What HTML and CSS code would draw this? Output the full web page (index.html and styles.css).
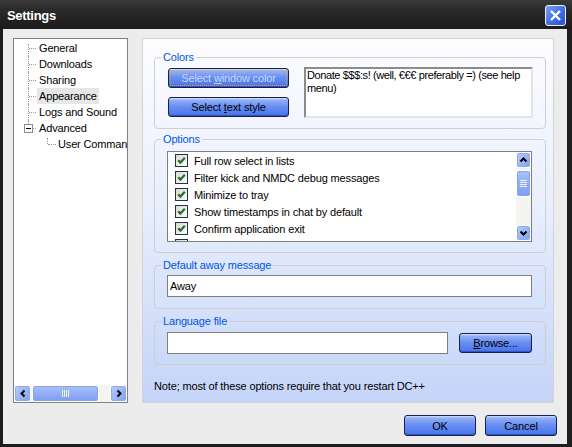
FILE: index.html
```html
<!DOCTYPE html>
<html lang="en">
<head>
    <meta charset="UTF-8">
    <title>Settings</title>
    <link rel="stylesheet" href="styles.css">
</head>
<body>
    <div class="window">
        <div class="titlebar">
            <span class="title">Settings</span>
            <button class="close-btn">
                <svg width="19" height="19" viewBox="0 0 19 19"><path d="M5 5 L14 14 M14 5 L5 14" stroke="#fff" stroke-width="2.4" fill="none"/></svg>
            </button>
        </div>
        <div class="client">
            <div class="main">
                <div class="tree">
                    <ul class="tree-list">
                        <li class="tree-item first"><span class="tree-label">General</span></li>
                        <li class="tree-item"><span class="tree-label">Downloads</span></li>
                        <li class="tree-item"><span class="tree-label">Sharing</span></li>
                        <li class="tree-item"><span class="tree-label selected">Appearance</span></li>
                        <li class="tree-item"><span class="tree-label">Logs and Sound</span></li>
                        <li class="tree-item last"><span class="tree-toggle"></span><span class="tree-label">Advanced</span></li>
                        <li class="tree-item child"><span class="tree-label">User Commands</span></li>
                    </ul>
                    <div class="hscroll">
                        <span class="sb-btn">
                            <svg width="8" height="9" viewBox="0 0 8 9"><path d="M5.5 1.5 L2.5 4.5 L5.5 7.5" stroke="#000" stroke-width="2" fill="none"/></svg>
                        </span>
                        <span class="sb-thumb sb-thumb-h"><i></i><i></i><i></i><i></i></span>
                        <span class="sb-track"></span>
                        <span class="sb-btn">
                            <svg width="8" height="9" viewBox="0 0 8 9"><path d="M2.5 1.5 L5.5 4.5 L2.5 7.5" stroke="#000" stroke-width="2" fill="none"/></svg>
                        </span>
                    </div>
                </div>

                <div class="panel">
                    <fieldset class="group group-colors">
                        <legend>Colors</legend>
                        <div class="colors-row">
                            <div class="color-buttons">
                                <button class="xp-btn color-btn focused">Select <u>w</u>indow color</button>
                                <button class="xp-btn color-btn">Select <u>t</u>ext style</button>
                            </div>
                            <div class="preview">Donate $$$:s! (well, €€€ preferably =) (see help menu)</div>
                        </div>
                    </fieldset>

                    <fieldset class="group group-options">
                        <legend>Options</legend>
                        <div class="optlist">
                            <div class="opt-items">
                                <div class="opt-row"><span class="check"><svg width="11" height="11" viewBox="0 0 11 11"><path d="M2.2 5.2 L4.4 7.6 L8.8 2.8" stroke="#2d6a2d" stroke-width="2.2" fill="none"/></svg></span>Full row select in lists</div>
                                <div class="opt-row"><span class="check"><svg width="11" height="11" viewBox="0 0 11 11"><path d="M2.2 5.2 L4.4 7.6 L8.8 2.8" stroke="#2d6a2d" stroke-width="2.2" fill="none"/></svg></span>Filter kick and NMDC debug messages</div>
                                <div class="opt-row"><span class="check"><svg width="11" height="11" viewBox="0 0 11 11"><path d="M2.2 5.2 L4.4 7.6 L8.8 2.8" stroke="#2d6a2d" stroke-width="2.2" fill="none"/></svg></span>Minimize to tray</div>
                                <div class="opt-row"><span class="check"><svg width="11" height="11" viewBox="0 0 11 11"><path d="M2.2 5.2 L4.4 7.6 L8.8 2.8" stroke="#2d6a2d" stroke-width="2.2" fill="none"/></svg></span>Show timestamps in chat by default</div>
                                <div class="opt-row"><span class="check"><svg width="11" height="11" viewBox="0 0 11 11"><path d="M2.2 5.2 L4.4 7.6 L8.8 2.8" stroke="#2d6a2d" stroke-width="2.2" fill="none"/></svg></span>Confirm application exit</div>
                                <div class="opt-row"><span class="check"></span></div>
                            </div>
                            <div class="vscroll">
                                <span class="sb-btn sb-btn-v">
                                    <svg width="9" height="8" viewBox="0 0 9 8"><path d="M1.5 5.5 L4.5 2.5 L7.5 5.5" stroke="#000" stroke-width="2" fill="none"/></svg>
                                </span>
                                <span class="sb-thumb sb-thumb-v"><i></i><i></i><i></i><i></i></span>
                                <span class="sb-track"></span>
                                <span class="sb-btn sb-btn-v">
                                    <svg width="9" height="8" viewBox="0 0 9 8"><path d="M1.5 2.5 L4.5 5.5 L7.5 2.5" stroke="#000" stroke-width="2" fill="none"/></svg>
                                </span>
                            </div>
                        </div>
                    </fieldset>

                    <fieldset class="group group-away">
                        <legend>Default away message</legend>
                        <div class="textbox">Away</div>
                    </fieldset>

                    <fieldset class="group group-lang">
                        <legend>Language file</legend>
                        <div class="lang-row">
                            <div class="textbox lang-box"></div>
                            <button class="xp-btn browse-btn"><u>B</u>rowse...</button>
                        </div>
                    </fieldset>

                    <p class="note">Note; most of these options require that you restart DC++</p>
                </div>
            </div>

            <div class="footer">
                <button class="xp-btn dlg-btn">OK</button>
                <button class="xp-btn dlg-btn">Cancel</button>
            </div>
        </div>
    </div>
</body>
</html>
```

FILE: styles.css
```css
body {
    margin: 0;
    font-family: "Liberation Sans", Arial, sans-serif;
    font-size: 11px;
    letter-spacing: -0.15px;
    color: #000;
}
.window {
    width: 572px;
    height: 447px;
    background: #1e1e1e;
    display: flex;
    flex-direction: column;
}
.titlebar {
    height: 29px;
    box-sizing: border-box;
    padding: 0 6px 0 7px;
    display: flex;
    align-items: center;
    justify-content: space-between;
    background: linear-gradient(#3a3a3a 0, #2b2b2b 30%, #1b1b1b 100%);
}
.title {
    color: #fff;
    font-weight: bold;
    font-size: 13px;
    letter-spacing: -0.3px;
    margin-top: 2px;
}
.close-btn {
    width: 21px;
    height: 21px;
    padding: 0;
    margin-top: 2px;
    border: 1px solid #f2f2f2;
    border-radius: 3px;
    background: linear-gradient(135deg, #79a0f8 0, #3f6ee6 55%, #2552d2 100%);
    display: flex;
    align-items: center;
    justify-content: center;
}
.client {
    flex: 1;
    margin: 0 5px 3px 3px;
    background: #ececec;
    padding: 9px 10px 0 10px;
    display: flex;
    flex-direction: column;
}
.main {
    display: flex;
    gap: 14px;
}

/* tree */
.tree {
    width: 115px;
    height: 365px;
    box-sizing: border-box;
    border: 1px solid #828282;
    background: #fff;
    display: flex;
    flex-direction: column;
}
.tree-list {
    flex: 1;
    list-style: none;
    margin: 0;
    padding: 1px 0 0 0;
    overflow: hidden;
}
.tree-item {
    position: relative;
    height: 16px;
    padding-left: 23px;
    white-space: nowrap;
}
.tree-item::before {
    content: "";
    position: absolute;
    left: 14px;
    top: 0;
    height: 16px;
    border-left: 1px dotted #9a9a9a;
}
.tree-item.first::before {
    top: 4px;
    height: 12px;
}
.tree-item.last::before {
    height: 8px;
}
.tree-item::after {
    content: "";
    position: absolute;
    left: 15px;
    top: 8px;
    width: 7px;
    border-top: 1px dotted #9a9a9a;
}
.tree-item.child {
    padding-left: 42px;
}
.tree-item.child::before {
    left: 33px;
    top: 2px;
    height: 6px;
}
.tree-item.child::after {
    left: 34px;
    width: 8px;
}
.tree-toggle {
    position: absolute;
    left: 10px;
    top: 4px;
    width: 9px;
    height: 9px;
    box-sizing: border-box;
    border: 1px solid #8c8c8c;
    background: #fff;
    z-index: 1;
}
.tree-toggle::before {
    content: "";
    position: absolute;
    left: 1px;
    top: 3px;
    width: 5px;
    height: 1px;
    background: #000;
}
.tree-label {
    display: inline-block;
    height: 16px;
    line-height: 16px;
    padding: 0 2px;
}
.tree-label.selected {
    background: #e6e6e6;
}

/* scrollbars */
.hscroll {
    height: 17px;
    display: flex;
    background: #f4f4f0;
}
.vscroll {
    width: 15px;
    display: flex;
    flex-direction: column;
    background: #f4f4f0;
}
.sb-btn {
    width: 17px;
    height: 17px;
    box-sizing: border-box;
    border: 1px solid #fff;
    border-radius: 3px;
    background: linear-gradient(135deg, #b9cdfb, #7fa0f2);
    box-shadow: inset 0 0 0 1px #8eaaee;
    display: flex;
    align-items: center;
    justify-content: center;
}
.sb-btn-v {
    width: 15px;
    height: 16px;
}
.sb-track {
    flex: 1;
}
.sb-thumb {
    box-sizing: border-box;
    border: 1px solid #fff;
    border-radius: 3px;
    background: linear-gradient(#a9c0f8, #7c9df2);
    box-shadow: inset 0 0 0 1px #86a3ec;
    display: flex;
    align-items: center;
    justify-content: center;
    gap: 1px;
}
.sb-thumb i {
    display: block;
    background: #eef3fe;
}
.sb-thumb-h {
    width: 67px;
    height: 17px;
    margin-left: 1px;
}
.sb-thumb-h i {
    width: 1px;
    height: 7px;
}
.sb-thumb-v {
    height: 27px;
    margin-top: 2px;
    flex-direction: column;
}
.sb-thumb-v i {
    width: 7px;
    height: 1px;
}

/* right panel */
.panel {
    width: 412px;
    height: 365px;
    box-sizing: border-box;
    border: 1px solid #d3d3d3;
    background: linear-gradient(#fdfdff 0, #e9effd 45%, #c4d4f8 100%);
    padding: 12px 7px 0 11px;
    display: flex;
    flex-direction: column;
}
.group {
    margin: 0;
    border: 1px solid #cfcfcf;
    border-radius: 4px;
    padding: 3px 13px 10px 12px;
    min-width: 0;
}
.group legend {
    padding: 0 2px;
    margin-left: -6px;
    line-height: 13px;
    color: #0055e5;
}
.group-options {
    margin-top: 4px;
    padding-top: 5px;
}
.group-away {
    margin-top: 6px;
    padding-top: 3px;
    padding-bottom: 11px;
}
.group-lang {
    margin-top: 6px;
    padding-top: 4px;
}
.colors-row {
    display: flex;
    justify-content: space-between;
    align-items: flex-start;
    margin-right: -1px;
}
.color-buttons {
    display: flex;
    flex-direction: column;
    gap: 9px;
    padding: 1px 0 0 1px;
}
.preview {
    width: 229px;
    height: 51px;
    box-sizing: border-box;
    border: 2px solid;
    border-color: #8c8c8c #e4e4e4 #e4e4e4 #8c8c8c;
    background: #fff;
    padding: 0 0 0 1px;
    line-height: 13px;
    letter-spacing: -0.4px;
}

/* blue buttons */
.xp-btn {
    font-family: inherit;
    font-size: 11px;
    letter-spacing: -0.15px;
    color: #000;
    padding: 0;
    border: 1px solid #16224a;
    border-radius: 3px;
    background: linear-gradient(#d6e2fd 0, #92b0f7 2px, #6b90f2 45%, #4672ea 100%);
    box-shadow: inset 0 -1px #2e54c2;
}
.color-btn {
    width: 121px;
    height: 20px;
}
.color-btn.focused {
    color: #c8d6f6;
    outline: 1px dotted #d8a048;
    outline-offset: -3px;
}
.browse-btn {
    width: 73px;
    height: 20px;
}
.dlg-btn {
    width: 72px;
    height: 21px;
}

/* options list */
.optlist {
    height: 91px;
    box-sizing: border-box;
    border: 1px solid #7f7f7f;
    background: #fff;
    display: flex;
}
.opt-items {
    flex: 1;
    overflow: hidden;
    padding-left: 7px;
}
.opt-row {
    height: 17px;
    display: flex;
    align-items: center;
    gap: 6px;
    white-space: nowrap;
}
.check {
    width: 13px;
    height: 13px;
    box-sizing: border-box;
    border: 1px solid #23324a;
    background: linear-gradient(135deg, #d9d9d4, #fbfbf9);
    display: flex;
    align-items: center;
    justify-content: center;
}

.textbox {
    height: 22px;
    box-sizing: border-box;
    border: 1px solid #7f7f7f;
    background: #fff;
    padding-left: 2px;
    line-height: 20px;
}
.lang-row {
    display: flex;
    align-items: center;
    gap: 11px;
}
.lang-box {
    width: 281px;
}
.note {
    margin: 15px 0 0 0;
    line-height: 13px;
}

.footer {
    margin-top: 12px;
    display: flex;
    justify-content: flex-end;
    gap: 9px;
}
```
